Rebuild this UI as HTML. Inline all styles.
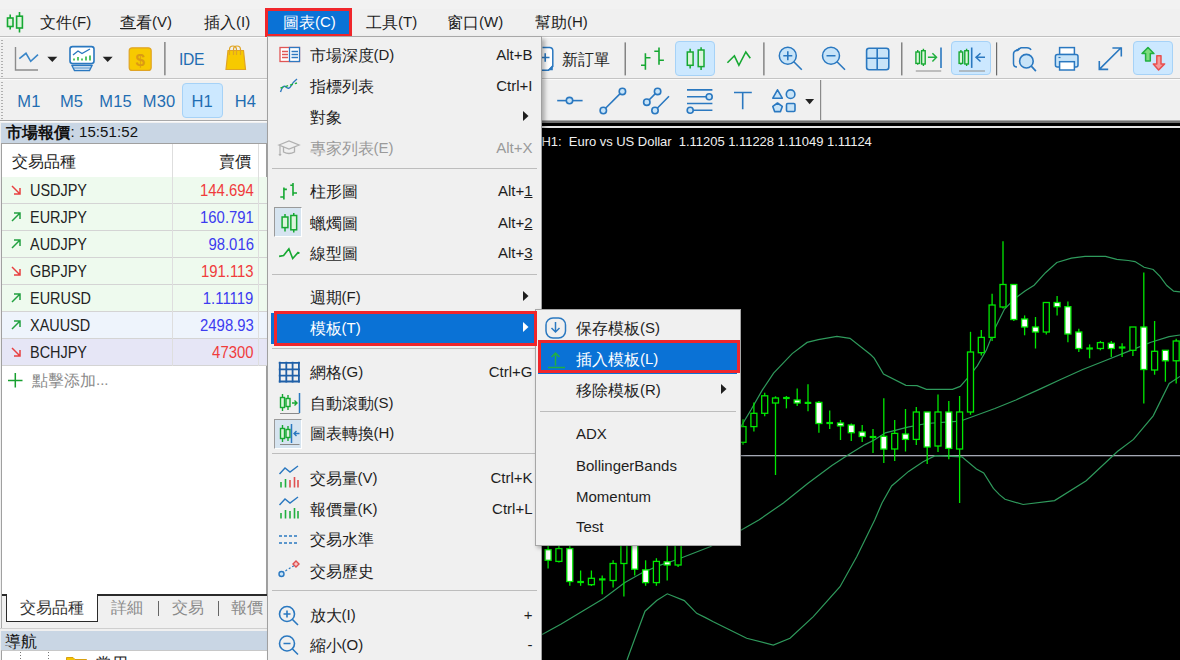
<!DOCTYPE html><html><head><meta charset="utf-8"><style>
*{box-sizing:border-box;margin:0;padding:0}
html,body{width:1180px;height:660px;overflow:hidden}
body{position:relative;background:#f0f0f0;font-family:"Liberation Sans",sans-serif;font-size:14px;color:#1e1e1e}
.a{position:absolute}
.t{position:absolute;white-space:nowrap;line-height:1}
svg{position:absolute;overflow:visible}
.cj{font-size:16px;vertical-align:-0.5px}
</style></head><body><div class="a" style="left:0px;top:0px;width:1180px;height:9px;background:#f2f2f2"></div><div class="a" style="left:0px;top:36px;width:1180px;height:1px;background:#c0c0c0"></div><div class="a" style="left:0px;top:37px;width:1180px;height:1px;background:#fbfbfb"></div><svg style="left:0px;top:0px" width="40" height="36" viewBox="0 0 40 36"><g stroke="#16a832" stroke-width="1.6" fill="#dcf5dc"><line x1="10.2" y1="14.5" x2="10.2" y2="29.5"/><rect x="7.5" y="18" width="5.5" height="8.5"/><line x1="19.5" y1="12" x2="19.5" y2="32.5"/><rect x="16.6" y="16.2" width="5.8" height="11.8"/></g></svg><div class="t" style="left:40px;top:14px;font-size:15px;color:#1e1e1e;"><span class="cj">文件</span>(F)</div><div class="t" style="left:120px;top:14px;font-size:15px;color:#1e1e1e;"><u><span class="cj">查</span></u><span class="cj">看</span>(V)</div><div class="t" style="left:204px;top:14px;font-size:15px;color:#1e1e1e;"><span class="cj">插入</span>(I)</div><div class="t" style="left:366px;top:14px;font-size:15px;color:#1e1e1e;"><span class="cj">工具</span>(T)</div><div class="t" style="left:447px;top:14px;font-size:15px;color:#1e1e1e;"><span class="cj">窗口</span>(W)</div><div class="t" style="left:535px;top:14px;font-size:15px;color:#1e1e1e;"><span class="cj">幫助</span>(H)</div><div class="a" style="left:264.8px;top:8.2px;width:87px;height:29px;background:#0a72d6;border:3.7px solid #f0262b"></div><div class="t" style="left:283px;top:14px;font-size:15px;color:#ffffff;"><span class="cj">圖表</span>(C)</div><div class="a" style="left:0px;top:78px;width:1180px;height:1px;background:#c4c4c4"></div><div class="a" style="left:0px;top:79px;width:1180px;height:1px;background:#fbfbfb"></div><div class="a" style="left:0px;top:120px;width:1180px;height:1px;background:#a9a9a9"></div><div class="a" style="left:0px;top:121px;width:1180px;height:1px;background:#fbfbfb"></div><div class="a" style="left:0.5px;top:40px;width:2px;height:1px;background:#b0b0b0"></div><div class="a" style="left:0.5px;top:43px;width:2px;height:1px;background:#b0b0b0"></div><div class="a" style="left:0.5px;top:46px;width:2px;height:1px;background:#b0b0b0"></div><div class="a" style="left:0.5px;top:49px;width:2px;height:1px;background:#b0b0b0"></div><div class="a" style="left:0.5px;top:52px;width:2px;height:1px;background:#b0b0b0"></div><div class="a" style="left:0.5px;top:55px;width:2px;height:1px;background:#b0b0b0"></div><div class="a" style="left:0.5px;top:58px;width:2px;height:1px;background:#b0b0b0"></div><div class="a" style="left:0.5px;top:61px;width:2px;height:1px;background:#b0b0b0"></div><div class="a" style="left:0.5px;top:64px;width:2px;height:1px;background:#b0b0b0"></div><div class="a" style="left:0.5px;top:67px;width:2px;height:1px;background:#b0b0b0"></div><div class="a" style="left:0.5px;top:70px;width:2px;height:1px;background:#b0b0b0"></div><div class="a" style="left:0.5px;top:73px;width:2px;height:1px;background:#b0b0b0"></div><div class="a" style="left:0.5px;top:76px;width:2px;height:1px;background:#b0b0b0"></div><div class="a" style="left:0.5px;top:82px;width:2px;height:1px;background:#b0b0b0"></div><div class="a" style="left:0.5px;top:85px;width:2px;height:1px;background:#b0b0b0"></div><div class="a" style="left:0.5px;top:88px;width:2px;height:1px;background:#b0b0b0"></div><div class="a" style="left:0.5px;top:91px;width:2px;height:1px;background:#b0b0b0"></div><div class="a" style="left:0.5px;top:94px;width:2px;height:1px;background:#b0b0b0"></div><div class="a" style="left:0.5px;top:97px;width:2px;height:1px;background:#b0b0b0"></div><div class="a" style="left:0.5px;top:100px;width:2px;height:1px;background:#b0b0b0"></div><div class="a" style="left:0.5px;top:103px;width:2px;height:1px;background:#b0b0b0"></div><div class="a" style="left:0.5px;top:106px;width:2px;height:1px;background:#b0b0b0"></div><div class="a" style="left:0.5px;top:109px;width:2px;height:1px;background:#b0b0b0"></div><div class="a" style="left:0.5px;top:112px;width:2px;height:1px;background:#b0b0b0"></div><div class="a" style="left:0.5px;top:115px;width:2px;height:1px;background:#b0b0b0"></div><div class="a" style="left:0.5px;top:118px;width:2px;height:1px;background:#b0b0b0"></div><svg style="left:0px;top:38px" width="270" height="40" viewBox="0 0 270 40">
<g fill="none" stroke-width="1.4">
<path d="M15.5 9 V32 H38" stroke="#8c8c8c"/>
<path d="M19.3 20.7 L26 15.3 L30.7 23.3 L38 16.7" stroke="#3a86c8" stroke-width="1.6"/>
</g>
<path d="M47.3 18.7 H57.3 L52.3 24 Z" fill="#222"/>
<rect x="70" y="8.6" width="24" height="17" rx="2.5" fill="#fff" stroke="#2a78c0" stroke-width="1.6"/>
<path d="M73 17 L78 13 L82 15.5 L90 11" fill="none" stroke="#2a78c0" stroke-width="1.4"/>
<g stroke="#2ab540" stroke-width="1.6"><line x1="74" y1="22.5" x2="74" y2="20.5"/><line x1="78" y1="22.5" x2="78" y2="19"/><line x1="82" y1="22.5" x2="82" y2="20.5"/><line x1="86" y1="22.5" x2="86" y2="18.5"/><line x1="90" y1="22.5" x2="90" y2="17.5"/></g>
<path d="M72 27.5 H92 L89.5 32.5 H74.5 Z" fill="#fff" stroke="#2a78c0" stroke-width="1.4"/>
<line x1="74" y1="30" x2="90" y2="30" stroke="#2a78c0" stroke-width="1"/>
<path d="M102.7 18.7 H112.7 L107.7 24 Z" fill="#222"/>
<rect x="129.2" y="9.8" width="22" height="22.6" rx="3" fill="#f7c900" stroke="#e0a424" stroke-width="1.2"/>
<text x="140.2" y="27.5" font-size="17" font-family="Liberation Sans" font-weight="bold" fill="#dc9a14" text-anchor="middle">$</text>
<rect x="164.3" y="4" width="1.2" height="33.3" fill="#6a6a6a"/>
<path d="M226 31.5 L228 12.5 H243.5 L245.5 31.5 Z" fill="#f7c900" stroke="#e0a424" stroke-width="1.2"/>
<path d="M229.5 17 V11.5 A3.5 3.5 0 0 1 236.5 11.5 V17 M233.5 17 V11.5 A3.5 3.5 0 0 1 240.5 11.5 V17" fill="none" stroke="#e0a424" stroke-width="1.2"/>
</svg><div class="t" style="left:178.5px;top:50.5px;font-size:16.5px;color:#1f6db2;letter-spacing:-0.3px;transform:scaleX(0.95);transform-origin:left">IDE</div><div class="a" style="left:181.6px;top:82.7px;width:41px;height:35px;background:#cce8ff;border:1px solid #a6d2f7;border-radius:4px"></div><div class="t" style="left:17.3px;top:92.5px;font-size:16.5px;color:#1f6db2;letter-spacing:0.1px">M1</div><div class="t" style="left:60px;top:92.5px;font-size:16.5px;color:#1f6db2;letter-spacing:0.1px">M5</div><div class="t" style="left:99.3px;top:92.5px;font-size:16.5px;color:#1f6db2;letter-spacing:0.1px">M15</div><div class="t" style="left:142.8px;top:92.5px;font-size:16.5px;color:#1f6db2;letter-spacing:0.1px">M30</div><div class="t" style="left:191.6px;top:92.5px;font-size:16.5px;color:#1f6db2;letter-spacing:0.1px">H1</div><div class="t" style="left:234.7px;top:92.5px;font-size:16.5px;color:#1f6db2;letter-spacing:0.1px">H4</div><div class="a" style="left:541px;top:121px;width:639px;height:539px;background:#000"></div><div class="a" style="left:541px;top:121px;width:639px;height:1.5px;background:#707070"></div><div class="a" style="left:541px;top:126px;width:639px;height:1.5px;background:#e4e4e4"></div><svg style="left:0;top:0" width="1180" height="660" viewBox="0 0 1180 660"><defs><clipPath id="cc"><rect x="541" y="128" width="639" height="532"/></clipPath></defs><g clip-path="url(#cc)"><rect x="541" y="455" width="639" height="1.3" fill="#a4a8b4"/><polyline points="740.0,428.1 751.2,409.5 762.4,389.9 773.6,373.1 792.2,353.6 807.1,342.4 818.3,339.6 836.9,336.4 850.0,338.3 870.5,354.5 874.2,358.2 883.5,374.1 905.9,385.3 917.1,385.6 926.4,389.4 952.5,389.4 960.2,386.4 968.2,377.3 977.3,365.9 986.4,350.0 995.5,327.3 1004.5,309.1 1015.9,297.7 1025.0,290.9 1034.1,285.2 1045.5,272.7 1056.8,262.5 1071.4,258.2 1085.0,256.4 1105.5,256.4 1116.8,259.3 1128.2,260.5 1135.0,261.6 1144.1,267.3 1153.2,269.5 1160.0,276.4 1166.8,285.5 1173.6,291.1 1180.0,291.8" fill="none" stroke="#2f9a5c" stroke-width="1.2"/><polyline points="542.1,634.6 561.2,624.0 582.4,611.2 603.6,598.5 624.9,582.6 641.8,573.0 658.8,565.6 677.9,559.2 710.0,546.7 740.0,530.7 759.2,519.8 783.4,502.9 807.7,483.5 831.9,465.4 848.8,454.5 865.0,444.6 874.2,440.0 885.4,432.8 907.8,427.2 926.4,423.5 960.0,421.2 994.9,408.5 1015.9,400.0 1040.9,388.6 1060.0,379.8 1082.7,369.5 1105.5,360.5 1128.2,351.4 1150.9,342.3 1169.1,336.6 1180.0,335.0" fill="none" stroke="#2f9a5c" stroke-width="1.2"/><polyline points="627.0,660.0 635.5,636.7 645.0,611.2 656.7,600.6 667.3,593.8 684.3,600.6 696.7,613.3 705.5,617.6 713.3,621.7 730.0,630.0 746.7,638.3 773.3,645.0 790.0,638.3 813.3,616.7 840.0,586.7 856.7,556.7 874.7,520.0 882.0,502.9 891.6,486.0 908.6,471.4 923.1,461.7 935.2,455.7 961.9,456.9 976.4,469.0 983.7,473.0 993.4,488.4 999.4,494.6 1005.0,499.3 1023.1,504.5 1054.6,500.6 1086.2,480.8 1117.7,451.3 1133.5,439.4 1153.2,415.8 1169.2,383.4 1180.0,376.4" fill="none" stroke="#2f9a5c" stroke-width="1.2"/><line x1="548.1" y1="530" x2="548.1" y2="568.4" stroke="#00e800" stroke-width="1.3"/><rect x="545.1" y="549.7" width="6" height="10.6" fill="#fff" stroke="#00e800" stroke-width="1.3"/><line x1="558.9" y1="540" x2="558.9" y2="562.4" stroke="#00e800" stroke-width="1.3"/><rect x="555.9" y="548.6" width="6" height="12.8" fill="#000" stroke="#00e800" stroke-width="1.3"/><line x1="569.8" y1="540" x2="569.8" y2="585.8" stroke="#00e800" stroke-width="1.3"/><rect x="566.8" y="548.6" width="6" height="32.9" fill="#fff" stroke="#00e800" stroke-width="1.3"/><line x1="580.6" y1="570.5" x2="580.6" y2="585.8" stroke="#00e800" stroke-width="1.3"/><line x1="577.3" y1="582" x2="583.9" y2="582" stroke="#00e800" stroke-width="2.2"/><line x1="591.4" y1="570.5" x2="591.4" y2="586" stroke="#00e800" stroke-width="1.3"/><rect x="588.4" y="578.3" width="6" height="6.4" fill="#000" stroke="#00e800" stroke-width="1.3"/><line x1="602.2" y1="575.6" x2="602.2" y2="594.2" stroke="#00e800" stroke-width="1.3"/><line x1="599.0" y1="579.4" x2="605.5" y2="579.4" stroke="#00e800" stroke-width="2.2"/><line x1="613.1" y1="560.3" x2="613.1" y2="587.5" stroke="#00e800" stroke-width="1.3"/><rect x="610.1" y="563.5" width="6" height="17.0" fill="#000" stroke="#00e800" stroke-width="1.3"/><line x1="623.9" y1="530" x2="623.9" y2="596.4" stroke="#00e800" stroke-width="1.3"/><rect x="620.9" y="540" width="6" height="23.5" fill="#000" stroke="#00e800" stroke-width="1.3"/><line x1="634.7" y1="530" x2="634.7" y2="575.6" stroke="#00e800" stroke-width="1.3"/><rect x="631.7" y="540" width="6" height="29.2" fill="#fff" stroke="#00e800" stroke-width="1.3"/><line x1="645.6" y1="560.3" x2="645.6" y2="585.8" stroke="#00e800" stroke-width="1.3"/><rect x="642.6" y="569.9" width="6" height="12.7" fill="#fff" stroke="#00e800" stroke-width="1.3"/><line x1="656.4" y1="558.2" x2="656.4" y2="585.8" stroke="#00e800" stroke-width="1.3"/><rect x="653.4" y="561.4" width="6" height="21.2" fill="#000" stroke="#00e800" stroke-width="1.3"/><line x1="667.2" y1="540" x2="667.2" y2="580.5" stroke="#00e800" stroke-width="1.3"/><rect x="664.2" y="561.8" width="6" height="3.2" fill="#fff" stroke="#00e800" stroke-width="1.3"/><line x1="678.1" y1="530" x2="678.1" y2="567.1" stroke="#00e800" stroke-width="1.3"/><rect x="675.1" y="540" width="6" height="25.0" fill="#000" stroke="#00e800" stroke-width="1.3"/><line x1="743.0" y1="419.3" x2="743.0" y2="444.8" stroke="#00e800" stroke-width="1.3"/><rect x="740.0" y="426.6" width="6" height="15.7" fill="#000" stroke="#00e800" stroke-width="1.3"/><line x1="753.9" y1="402.4" x2="753.9" y2="431.4" stroke="#00e800" stroke-width="1.3"/><rect x="750.9" y="413.3" width="6" height="13.3" fill="#000" stroke="#00e800" stroke-width="1.3"/><line x1="764.7" y1="392.7" x2="764.7" y2="416.2" stroke="#00e800" stroke-width="1.3"/><rect x="761.7" y="395.8" width="6" height="17.5" fill="#000" stroke="#00e800" stroke-width="1.3"/><line x1="775.5" y1="396.3" x2="775.5" y2="475" stroke="#00e800" stroke-width="1.3"/><rect x="772.5" y="398" width="6" height="5.0" fill="#000" stroke="#00e800" stroke-width="1.3"/><line x1="786.4" y1="396" x2="786.4" y2="408.4" stroke="#00e800" stroke-width="1.3"/><line x1="783.1" y1="398" x2="789.7" y2="398" stroke="#00e800" stroke-width="2.2"/><line x1="797.2" y1="388.6" x2="797.2" y2="406" stroke="#00e800" stroke-width="1.3"/><rect x="794.2" y="400" width="6" height="3.0" fill="#fff" stroke="#00e800" stroke-width="1.3"/><line x1="808.0" y1="384.2" x2="808.0" y2="411.3" stroke="#00e800" stroke-width="1.3"/><line x1="804.7" y1="402.9" x2="811.3" y2="402.9" stroke="#00e800" stroke-width="2.2"/><line x1="818.9" y1="401" x2="818.9" y2="432.7" stroke="#00e800" stroke-width="1.3"/><rect x="815.9" y="402.4" width="6" height="21.1" fill="#fff" stroke="#00e800" stroke-width="1.3"/><line x1="829.7" y1="410.4" x2="829.7" y2="429" stroke="#00e800" stroke-width="1.3"/><line x1="826.4" y1="423" x2="833.0" y2="423" stroke="#00e800" stroke-width="2.2"/><line x1="840.5" y1="420" x2="840.5" y2="440" stroke="#00e800" stroke-width="1.3"/><rect x="837.5" y="423" width="6" height="2.9" fill="#fff" stroke="#00e800" stroke-width="1.3"/><line x1="851.3" y1="423.5" x2="851.3" y2="441" stroke="#00e800" stroke-width="1.3"/><rect x="848.3" y="425" width="6" height="7.7" fill="#fff" stroke="#00e800" stroke-width="1.3"/><line x1="862.2" y1="425" x2="862.2" y2="442" stroke="#00e800" stroke-width="1.3"/><rect x="859.2" y="432" width="6" height="4.5" fill="#fff" stroke="#00e800" stroke-width="1.3"/><line x1="873.0" y1="429" x2="873.0" y2="453" stroke="#00e800" stroke-width="1.3"/><line x1="869.7" y1="437" x2="876.3" y2="437" stroke="#00e800" stroke-width="2.2"/><line x1="883.8" y1="398.3" x2="883.8" y2="463" stroke="#00e800" stroke-width="1.3"/><rect x="880.8" y="436.3" width="6" height="12.8" fill="#fff" stroke="#00e800" stroke-width="1.3"/><line x1="894.7" y1="420" x2="894.7" y2="461" stroke="#00e800" stroke-width="1.3"/><rect x="891.7" y="433.4" width="6" height="15.6" fill="#000" stroke="#00e800" stroke-width="1.3"/><line x1="905.5" y1="409" x2="905.5" y2="451.5" stroke="#00e800" stroke-width="1.3"/><rect x="902.5" y="434" width="6" height="5.4" fill="#fff" stroke="#00e800" stroke-width="1.3"/><line x1="916.3" y1="407" x2="916.3" y2="445" stroke="#00e800" stroke-width="1.3"/><rect x="913.3" y="412" width="6" height="27.4" fill="#000" stroke="#00e800" stroke-width="1.3"/><line x1="927.2" y1="412" x2="927.2" y2="464" stroke="#00e800" stroke-width="1.3"/><rect x="924.2" y="412" width="6" height="35.0" fill="#fff" stroke="#00e800" stroke-width="1.3"/><line x1="938.0" y1="394.4" x2="938.0" y2="452" stroke="#00e800" stroke-width="1.3"/><rect x="935.0" y="412" width="6" height="34.0" fill="#000" stroke="#00e800" stroke-width="1.3"/><line x1="948.8" y1="401" x2="948.8" y2="459.3" stroke="#00e800" stroke-width="1.3"/><rect x="945.8" y="412" width="6" height="36.4" fill="#fff" stroke="#00e800" stroke-width="1.3"/><line x1="959.6" y1="396" x2="959.6" y2="503" stroke="#00e800" stroke-width="1.3"/><rect x="956.6" y="412" width="6" height="37.0" fill="#000" stroke="#00e800" stroke-width="1.3"/><line x1="970.5" y1="331.8" x2="970.5" y2="414.8" stroke="#00e800" stroke-width="1.3"/><rect x="967.5" y="352" width="6" height="60.0" fill="#000" stroke="#00e800" stroke-width="1.3"/><line x1="981.3" y1="330" x2="981.3" y2="355.5" stroke="#00e800" stroke-width="1.3"/><rect x="978.3" y="337.4" width="6" height="15.3" fill="#000" stroke="#00e800" stroke-width="1.3"/><line x1="992.1" y1="293.8" x2="992.1" y2="341" stroke="#00e800" stroke-width="1.3"/><rect x="989.1" y="305" width="6" height="32.4" fill="#000" stroke="#00e800" stroke-width="1.3"/><line x1="1003.0" y1="241.3" x2="1003.0" y2="308.5" stroke="#00e800" stroke-width="1.3"/><rect x="1000.0" y="284.5" width="6" height="22.5" fill="#000" stroke="#00e800" stroke-width="1.3"/><line x1="1013.8" y1="284.5" x2="1013.8" y2="321" stroke="#00e800" stroke-width="1.3"/><rect x="1010.8" y="284.5" width="6" height="35.0" fill="#fff" stroke="#00e800" stroke-width="1.3"/><line x1="1024.6" y1="315.4" x2="1024.6" y2="335.3" stroke="#00e800" stroke-width="1.3"/><rect x="1021.6" y="319" width="6" height="8.0" fill="#fff" stroke="#00e800" stroke-width="1.3"/><line x1="1035.5" y1="317" x2="1035.5" y2="348.5" stroke="#00e800" stroke-width="1.3"/><rect x="1032.5" y="327" width="6" height="5.0" fill="#fff" stroke="#00e800" stroke-width="1.3"/><line x1="1046.3" y1="302.5" x2="1046.3" y2="334.6" stroke="#00e800" stroke-width="1.3"/><rect x="1043.3" y="302.5" width="6" height="29.5" fill="#000" stroke="#00e800" stroke-width="1.3"/><line x1="1057.1" y1="296" x2="1057.1" y2="315.4" stroke="#00e800" stroke-width="1.3"/><rect x="1054.1" y="302.5" width="6" height="4.2" fill="#fff" stroke="#00e800" stroke-width="1.3"/><line x1="1067.9" y1="301.5" x2="1067.9" y2="342.3" stroke="#00e800" stroke-width="1.3"/><rect x="1064.9" y="306.7" width="6" height="27.3" fill="#fff" stroke="#00e800" stroke-width="1.3"/><line x1="1078.8" y1="328.7" x2="1078.8" y2="352" stroke="#00e800" stroke-width="1.3"/><rect x="1075.8" y="332" width="6" height="16.5" fill="#fff" stroke="#00e800" stroke-width="1.3"/><line x1="1089.6" y1="344.4" x2="1089.6" y2="358.3" stroke="#00e800" stroke-width="1.3"/><line x1="1086.3" y1="348.5" x2="1092.9" y2="348.5" stroke="#00e800" stroke-width="2.2"/><line x1="1100.4" y1="340.9" x2="1100.4" y2="350.3" stroke="#00e800" stroke-width="1.3"/><rect x="1097.4" y="342.6" width="6" height="5.9" fill="#000" stroke="#00e800" stroke-width="1.3"/><line x1="1111.3" y1="341" x2="1111.3" y2="357" stroke="#00e800" stroke-width="1.3"/><rect x="1108.3" y="343.3" width="6" height="5.2" fill="#fff" stroke="#00e800" stroke-width="1.3"/><line x1="1122.1" y1="343.3" x2="1122.1" y2="357" stroke="#00e800" stroke-width="1.3"/><line x1="1118.8" y1="347.5" x2="1125.4" y2="347.5" stroke="#00e800" stroke-width="2.2"/><line x1="1132.9" y1="327" x2="1132.9" y2="356" stroke="#00e800" stroke-width="1.3"/><rect x="1129.9" y="327" width="6" height="23.3" fill="#000" stroke="#00e800" stroke-width="1.3"/><line x1="1143.8" y1="272.5" x2="1143.8" y2="403.6" stroke="#00e800" stroke-width="1.3"/><rect x="1140.8" y="327" width="6" height="42.5" fill="#fff" stroke="#00e800" stroke-width="1.3"/><line x1="1154.6" y1="321" x2="1154.6" y2="374.7" stroke="#00e800" stroke-width="1.3"/><rect x="1151.6" y="351.3" width="6" height="18.7" fill="#000" stroke="#00e800" stroke-width="1.3"/><line x1="1165.4" y1="350.3" x2="1165.4" y2="381.7" stroke="#00e800" stroke-width="1.3"/><rect x="1162.4" y="350.3" width="6" height="10.5" fill="#fff" stroke="#00e800" stroke-width="1.3"/><line x1="1176.2" y1="338.8" x2="1176.2" y2="383.4" stroke="#00e800" stroke-width="1.3"/><rect x="1173.2" y="341" width="6" height="19.8" fill="#000" stroke="#00e800" stroke-width="1.3"/></g></svg><div class="t" style="left:541.5px;top:134.5px;font-size:13px;color:#f0f0f0;letter-spacing:-0.03px">H1:&nbsp; Euro vs US Dollar&nbsp; 1.11205 1.11228 1.11049 1.11124</div><div class="a" style="left:0px;top:122px;width:268px;height:538px;background:#f0f0f0"></div><div class="a" style="left:1px;top:123px;width:266px;height:20px;background:#c9d6e4"></div><div class="t" style="left:6px;top:124px;font-size:15px;color:#111;letter-spacing:0.1px"><b><span class="cj">市場報價</span></b>: 15:51:52</div><div class="a" style="left:1px;top:143px;width:266px;height:452px;background:#fff;border:1px solid #a0a0a0"></div><div class="a" style="left:674.7px;top:40.5px;width:40.3px;height:35.4px;background:#cce8ff;border:1px solid #a6d2f7;border-radius:4px"></div><div class="a" style="left:951.4px;top:40.8px;width:40px;height:34.7px;background:#cce8ff;border:1px solid #a6d2f7;border-radius:4px"></div><div class="a" style="left:1133.1px;top:41px;width:39.5px;height:34.4px;background:#cce8ff;border:1px solid #a6d2f7;border-radius:4px"></div><svg style="left:535px;top:38px" width="645" height="40" viewBox="0 0 645 40">
<path d="M7.5 9.4 H14.5 Q17.8 9.4 17.8 12.7 V28.5 L13.5 32.2 H7" fill="#fff" stroke="#2a78c0" stroke-width="1.5"/>
<path d="M5.5 19.5 H14.5 M10.2 15.2 V23.8" stroke="#2a78c0" stroke-width="1.6"/>
<path d="M12.5 32.2 L17.8 26.8 V32.2 Z" fill="#2a78c0"/>
<rect x="89.6" y="4.4" width="1.2" height="33" fill="#6a6a6a"/>
<g stroke="#16a832" stroke-width="1.6" fill="none">
<path d="M110.4 15.3 V31.8 M106 27.3 H110.4 M110.4 19.7 H115.5"/>
<path d="M124 9.5 V26.7 M119.3 13.3 H124 M124 22.2 H128.9"/>
</g>
<g stroke="#16a832" stroke-width="1.5" fill="#dcf5dc">
<path d="M155.15 10.8 V30.5 M166.1 9.2 V32"/>
<rect x="152.3" y="14" width="5.8" height="13.3"/>
<rect x="163.2" y="12" width="5.8" height="16.6"/>
</g>
<path d="M192.4 24.8 L199.4 17.8 L203.9 27.3 L210.8 14 L215.3 20.3" fill="none" stroke="#16a832" stroke-width="1.6"/>
<rect x="228.3" y="4.4" width="1.2" height="33" fill="#6a6a6a"/>
<g stroke="#2a78c0" stroke-width="1.5" fill="#c8e4f8">
<circle cx="252.8" cy="17.8" r="8.5"/><circle cx="296" cy="17.8" r="8.5"/>
</g>
<g stroke="#2a78c0" stroke-width="1.6" fill="none">
<path d="M248.3 17.8 H257.3 M252.8 13.3 V22.3 M258.8 23.8 L266.8 31.8"/>
<path d="M291.5 17.8 H300.5 M302 23.8 L310 31.8"/>
</g>
<rect x="331.6" y="10.2" width="22.2" height="21.6" rx="2.5" fill="#c8e4f8" stroke="#2a78c0" stroke-width="1.6"/>
<path d="M342.2 10.2 V31.8 M331.6 20.3 H353.8" stroke="#2a78c0" stroke-width="1.6"/>
<rect x="366.2" y="4.4" width="1.2" height="33" fill="#6a6a6a"/>
<g stroke="#16a832" stroke-width="1.4" fill="#dcf5dc">
<path d="M382.7 12 V26.7 M388.4 10.8 V28"/>
<rect x="380.9" y="14" width="3.6" height="11.4"/><rect x="386.6" y="12.7" width="3.6" height="13.3"/>
</g>
<path d="M392.9 19.3 H401.5 M397.4 15.2 L401.5 19.3 L397.4 23.5" fill="none" stroke="#22b040" stroke-width="1.5"/>
<path d="M406 9.5 V29.9" stroke="#2a78c0" stroke-width="1.6"/>
<path d="M380.8 33 H406.2" stroke="#9a9a9a" stroke-width="1.2"/>
<g stroke="#16a832" stroke-width="1.4" fill="#dcf5dc">
<path d="M425.9 12 V26.7 M431.6 10.8 V28"/>
<rect x="424.1" y="14" width="3.6" height="11.4"/><rect x="429.8" y="12.7" width="3.6" height="13.3"/>
</g>
<path d="M436.7 9.5 V29.9" stroke="#2a78c0" stroke-width="1.6"/>
<path d="M450 19.3 H441 M445.5 15.2 L441 19.3 L445.5 23.5" fill="none" stroke="#2a78c0" stroke-width="1.5"/>
<path d="M424 33 H450" stroke="#9a9a9a" stroke-width="1.2"/>
<rect x="461" y="4.4" width="1.2" height="33" fill="#6a6a6a"/>
<g fill="none" stroke="#2a78c0" stroke-width="1.5">
<path d="M482 29 Q478.5 29 478.5 25.5 V16 Q478.5 13.5 481 12.5 L486 9.8 H492 Q495 9.8 496 12"/>
<path d="M481 12.5 Q484 12.5 484.5 10"/>
</g>
<circle cx="491.4" cy="23.2" r="6.8" fill="#c8e4f8" stroke="#2a78c0" stroke-width="1.6"/>
<path d="M496.3 28.2 L500.9 33.2" stroke="#2a78c0" stroke-width="1.7"/>
<g stroke="#2a78c0" stroke-width="1.5">
<rect x="524.6" y="9.6" width="14.8" height="7" fill="#fff"/>
<rect x="520.4" y="16.6" width="22.6" height="12.4" rx="2" fill="#c8e4f8"/>
<rect x="524.6" y="23.7" width="14.8" height="8.3" fill="#fff"/>
</g>
<path d="M523.5 19.5 H525.5" stroke="#2a78c0" stroke-width="1.2"/>
<g fill="none" stroke="#2a78c0" stroke-width="1.6">
<path d="M564.3 31.4 L586.3 9.5 M564.3 23.1 V31.4 H573.2 M577.4 10 H586.3 V18.4"/>
</g>
</svg><svg style="left:1132px;top:38px" width="48" height="40" viewBox="0 0 48 40">
<path d="M16 9.5 L21.9 15.6 H18.3 V23.1 H13.6 V15.6 H10 Z" fill="#7ddc7d" stroke="#22b040" stroke-width="1.5" stroke-linejoin="round"/>
<path d="M26.6 32 L32.6 25.9 H29 V17.8 H24.8 V25.9 H21.3 Z" fill="#f59a9a" stroke="#e85050" stroke-width="1.5" stroke-linejoin="round"/>
</svg><div class="t" style="left:561.7px;top:51px;font-size:15px;color:#1e1e1e;"><span class="cj">新訂單</span></div><svg style="left:535px;top:80px" width="300" height="42" viewBox="0 0 300 42">
<g fill="none" stroke="#2a78c0" stroke-width="1.6">
<path d="M22.2 20.6 H47.6"/>
<path d="M68.3 30.5 L87.4 11.4"/>
<path d="M111.8 22.2 L122.6 11.4 M120 30.5 L134 16.3"/>
<path d="M152 9.9 H177.4 M152 16.8 H174.2 M152 23.5 H177.4 M155.2 30.3 H177.4"/>
<path d="M199 12.5 H216.8 M207.7 12.5 V29.2"/>
</g>
<g fill="#c8e4f8" stroke="#2a78c0" stroke-width="1.6">
<circle cx="34.5" cy="20.6" r="3.2"/>
<circle cx="68.3" cy="30.5" r="3.2"/><circle cx="87.4" cy="11.4" r="3.2"/>
<circle cx="111.8" cy="22.2" r="3.2"/><circle cx="122.6" cy="11.4" r="3.2"/><circle cx="120" cy="30.5" r="3.2"/>
<circle cx="174.2" cy="16.8" r="3"/><circle cx="155.2" cy="30.3" r="3"/>
<path d="M242.5 9.8 L247.3 18.2 H237.8 Z" stroke-linejoin="round"/>
<circle cx="255.6" cy="14.2" r="4.3"/>
<path d="M242.5 23 L247.3 26.4 L245.5 31.6 H239.6 L237.8 26.4 Z" stroke-linejoin="round"/>
<rect x="251.5" y="23.5" width="8.5" height="8" rx="1.2"/>
</g>
<path d="M270.2 19 H279.1 L274.65 24.2 Z" fill="#222"/>
<rect x="285" y="0" width="1.2" height="40" fill="#8a8a8a"/>
</svg><div class="a" style="left:2px;top:177px;width:265px;height:27px;background:#eefaee"></div><div class="a" style="left:2px;top:203px;width:265px;height:1px;background:#d4d4d4"></div><div class="t" style="left:30px;top:182.2px;font-size:16.5px;color:#222;transform:scaleX(0.875);transform-origin:left">USDJPY</div><div class="t" style="right:926.4px;top:182.6px;font-size:16px;color:#f03c3c;transform:scaleX(0.93);transform-origin:right">144.694</div><svg style="left:10px;top:184px" width="12" height="12" viewBox="0 0 12 12"><path d="M2 2 L10 10 M10 4 V10 H4" fill="none" stroke="#e84040" stroke-width="1.5"/></svg><div class="a" style="left:2px;top:204px;width:265px;height:27px;background:#eefaee"></div><div class="a" style="left:2px;top:230px;width:265px;height:1px;background:#d4d4d4"></div><div class="t" style="left:30px;top:209.2px;font-size:16.5px;color:#222;transform:scaleX(0.875);transform-origin:left">EURJPY</div><div class="t" style="right:926.4px;top:209.6px;font-size:16px;color:#3c3cf0;transform:scaleX(0.93);transform-origin:right">160.791</div><svg style="left:10px;top:211px" width="12" height="12" viewBox="0 0 12 12"><path d="M2 10 L10 2 M4 2 H10 V8" fill="none" stroke="#22a040" stroke-width="1.5"/></svg><div class="a" style="left:2px;top:231px;width:265px;height:27px;background:#eefaee"></div><div class="a" style="left:2px;top:257px;width:265px;height:1px;background:#d4d4d4"></div><div class="t" style="left:30px;top:236.2px;font-size:16.5px;color:#222;transform:scaleX(0.875);transform-origin:left">AUDJPY</div><div class="t" style="right:926.4px;top:236.6px;font-size:16px;color:#3c3cf0;transform:scaleX(0.93);transform-origin:right">98.016</div><svg style="left:10px;top:238px" width="12" height="12" viewBox="0 0 12 12"><path d="M2 10 L10 2 M4 2 H10 V8" fill="none" stroke="#22a040" stroke-width="1.5"/></svg><div class="a" style="left:2px;top:258px;width:265px;height:27px;background:#eefaee"></div><div class="a" style="left:2px;top:284px;width:265px;height:1px;background:#d4d4d4"></div><div class="t" style="left:30px;top:263.2px;font-size:16.5px;color:#222;transform:scaleX(0.875);transform-origin:left">GBPJPY</div><div class="t" style="right:926.4px;top:263.6px;font-size:16px;color:#f03c3c;transform:scaleX(0.93);transform-origin:right">191.113</div><svg style="left:10px;top:265px" width="12" height="12" viewBox="0 0 12 12"><path d="M2 2 L10 10 M10 4 V10 H4" fill="none" stroke="#e84040" stroke-width="1.5"/></svg><div class="a" style="left:2px;top:285px;width:265px;height:27px;background:#eefaee"></div><div class="a" style="left:2px;top:311px;width:265px;height:1px;background:#d4d4d4"></div><div class="t" style="left:30px;top:290.2px;font-size:16.5px;color:#222;transform:scaleX(0.875);transform-origin:left">EURUSD</div><div class="t" style="right:926.4px;top:290.6px;font-size:16px;color:#3c3cf0;transform:scaleX(0.93);transform-origin:right">1.11119</div><svg style="left:10px;top:292px" width="12" height="12" viewBox="0 0 12 12"><path d="M2 10 L10 2 M4 2 H10 V8" fill="none" stroke="#22a040" stroke-width="1.5"/></svg><div class="a" style="left:2px;top:312px;width:265px;height:27px;background:#eef4fc"></div><div class="a" style="left:2px;top:338px;width:265px;height:1px;background:#d4d4d4"></div><div class="t" style="left:30px;top:317.2px;font-size:16.5px;color:#222;transform:scaleX(0.875);transform-origin:left">XAUUSD</div><div class="t" style="right:926.4px;top:317.6px;font-size:16px;color:#3c3cf0;transform:scaleX(0.93);transform-origin:right">2498.93</div><svg style="left:10px;top:319px" width="12" height="12" viewBox="0 0 12 12"><path d="M2 10 L10 2 M4 2 H10 V8" fill="none" stroke="#22a040" stroke-width="1.5"/></svg><div class="a" style="left:2px;top:339px;width:265px;height:27px;background:#e6e6f6"></div><div class="a" style="left:2px;top:365px;width:265px;height:1px;background:#d4d4d4"></div><div class="t" style="left:30px;top:344.2px;font-size:16.5px;color:#222;transform:scaleX(0.875);transform-origin:left">BCHJPY</div><div class="t" style="right:926.4px;top:344.6px;font-size:16px;color:#f03c3c;transform:scaleX(0.93);transform-origin:right">47300</div><svg style="left:10px;top:346px" width="12" height="12" viewBox="0 0 12 12"><path d="M2 2 L10 10 M10 4 V10 H4" fill="none" stroke="#e84040" stroke-width="1.5"/></svg><div class="a" style="left:172px;top:144px;width:1px;height:222px;background:#dedede"></div><div class="a" style="left:257.5px;top:144px;width:1px;height:222px;background:#dedede"></div><div class="t" style="left:11.6px;top:153px;font-size:15px;color:#222;"><span class="cj">交易品種</span></div><div class="t" style="left:219px;top:153px;font-size:15px;color:#222;"><span class="cj">賣價</span></div><svg style="left:8px;top:372.5px" width="15" height="15" viewBox="0 0 15 15"><path d="M0 7.5 H14.5 M7.3 0 V14.5" stroke="#18a030" stroke-width="1.5"/></svg><div class="t" style="left:32px;top:372px;font-size:15px;color:#8a8a8a;"><span class="cj">點擊添加</span>...</div><div class="a" style="left:1px;top:594px;width:266px;height:34px;background:#f0f0f0"></div><div class="a" style="left:1px;top:580px;width:1px;height:48px;background:#a8a8a8"></div><div class="a" style="left:2px;top:594.3px;width:265px;height:1.4px;background:#2a2a2a"></div><div class="a" style="left:5.5px;top:594.3px;width:92.3px;height:27.8px;background:#fff;border:1.6px solid #2a2a2a;border-top:none"></div><div class="a" style="left:7px;top:594.3px;width:89.4px;height:1.4px;background:#fff"></div><div class="t" style="left:19.6px;top:599px;font-size:15px;color:#333;"><span class="cj">交易品種</span></div><div class="t" style="left:111px;top:599px;font-size:15px;color:#8a8a8a;"><span class="cj">詳細</span></div><div class="a" style="left:157.5px;top:601px;width:1.3px;height:15px;background:#666"></div><div class="t" style="left:172px;top:599px;font-size:15px;color:#8a8a8a;"><span class="cj">交易</span></div><div class="a" style="left:217.5px;top:601px;width:1.3px;height:15px;background:#666"></div><div class="t" style="left:231px;top:599px;font-size:15px;color:#8a8a8a;"><span class="cj">報價</span></div><div class="a" style="left:0px;top:627.8px;width:267px;height:1.2px;background:#cfcfcf"></div><div class="a" style="left:1px;top:631.4px;width:266px;height:18.5px;background:#c9d6e4"></div><div class="t" style="left:5.3px;top:632.5px;font-size:15px;color:#111;"><span class="cj">導航</span></div><div class="a" style="left:1px;top:650px;width:266px;height:10px;background:#fff;border-left:1px solid #a0a0a0;border-top:1px solid #c8c8c8"></div><div class="a" style="left:19.6px;top:652px;width:1px;height:1.2px;background:#777"></div><div class="a" style="left:19.6px;top:655px;width:1px;height:1.2px;background:#777"></div><div class="a" style="left:19.6px;top:658px;width:1px;height:1.2px;background:#777"></div><div class="a" style="left:48px;top:652px;width:1px;height:1.2px;background:#777"></div><div class="a" style="left:48px;top:655px;width:1px;height:1.2px;background:#777"></div><div class="a" style="left:48px;top:658px;width:1px;height:1.2px;background:#777"></div><svg style="left:66px;top:656px" width="22" height="10" viewBox="0 0 22 10"><path d="M0.5 1.5 H7 L9 3.5 H20.5 V10 H0.5 Z" fill="#f5c400" stroke="#d8a010" stroke-width="1"/></svg><div class="t" style="left:96px;top:655px;font-size:15px;color:#222;"><span class="cj">常用</span></div><div class="a" style="left:267px;top:35.5px;width:275px;height:630px;background:#f0f0f0;border:1px solid #a0a0a0;border-top:1.5px solid #a8a8a8;box-shadow:3px 3px 4px rgba(0,0,0,.28)"></div><div class="a" style="left:272px;top:168px;width:265px;height:1px;background:#bdbdbd"></div><div class="a" style="left:272px;top:273.5px;width:265px;height:1px;background:#bdbdbd"></div><div class="a" style="left:272px;top:347.5px;width:265px;height:1px;background:#bdbdbd"></div><div class="a" style="left:272px;top:453px;width:265px;height:1px;background:#bdbdbd"></div><div class="a" style="left:272px;top:590.3px;width:265px;height:1px;background:#bdbdbd"></div><div class="a" style="left:271px;top:312.8px;width:266px;height:31px;background:#0a72d6"></div><div class="t" style="left:309.5px;top:47.4px;font-size:15px;color:#1e1e1e;"><span class="cj">市場深度</span>(D)</div><div class="t" style="right:647.5px;top:47.4px;font-size:15px;color:#1e1e1e">Alt+B</div><div class="t" style="left:309.5px;top:78.3px;font-size:15px;color:#1e1e1e;"><span class="cj">指標列表</span></div><div class="t" style="right:647.5px;top:78.3px;font-size:15px;color:#1e1e1e">Ctrl+I</div><div class="t" style="left:309.5px;top:109.2px;font-size:15px;color:#1e1e1e;"><span class="cj">對象</span></div><svg style="left:522.8px;top:111.2px" width="6" height="10" viewBox="0 0 6 10"><path d="M0 0 L5.5 5 L0 10 Z" fill="#1e1e1e"/></svg><div class="t" style="left:309.5px;top:140px;font-size:15px;color:#9a9a9a;"><span class="cj">專家列表</span>(E)</div><div class="t" style="right:647.5px;top:140px;font-size:15px;color:#9a9a9a">Alt+X</div><div class="t" style="left:309.5px;top:183.4px;font-size:15px;color:#1e1e1e;"><span class="cj">柱形圖</span></div><div class="t" style="right:647.5px;top:183.4px;font-size:15px;color:#1e1e1e">Alt+<u>1</u></div><div class="t" style="left:309.5px;top:214.6px;font-size:15px;color:#1e1e1e;"><span class="cj">蠟燭圖</span></div><div class="t" style="right:647.5px;top:214.6px;font-size:15px;color:#1e1e1e">Alt+<u>2</u></div><div class="t" style="left:309.5px;top:245.4px;font-size:15px;color:#1e1e1e;"><span class="cj">線型圖</span></div><div class="t" style="right:647.5px;top:245.4px;font-size:15px;color:#1e1e1e">Alt+<u>3</u></div><div class="t" style="left:309.5px;top:288.8px;font-size:15px;color:#1e1e1e;"><span class="cj">週期</span>(F)</div><svg style="left:522.8px;top:290.8px" width="6" height="10" viewBox="0 0 6 10"><path d="M0 0 L5.5 5 L0 10 Z" fill="#1e1e1e"/></svg><div class="t" style="left:309.5px;top:320.2px;font-size:15px;color:#ffffff;"><span class="cj">模板</span>(T)</div><svg style="left:522.8px;top:322.2px" width="6" height="10" viewBox="0 0 6 10"><path d="M0 0 L5.5 5 L0 10 Z" fill="#ffffff"/></svg><div class="t" style="left:309.5px;top:363.5px;font-size:15px;color:#1e1e1e;"><span class="cj">網格</span>(G)</div><div class="t" style="right:647.5px;top:363.5px;font-size:15px;color:#1e1e1e">Ctrl+G</div><div class="t" style="left:309.5px;top:394.6px;font-size:15px;color:#1e1e1e;"><span class="cj">自動滾動</span>(S)</div><div class="t" style="left:309.5px;top:425px;font-size:15px;color:#1e1e1e;"><span class="cj">圖表轉換</span>(H)</div><div class="t" style="left:309.5px;top:469.6px;font-size:15px;color:#1e1e1e;"><span class="cj">交易量</span>(V)</div><div class="t" style="right:647.5px;top:469.6px;font-size:15px;color:#1e1e1e">Ctrl+K</div><div class="t" style="left:309.5px;top:500.8px;font-size:15px;color:#1e1e1e;"><span class="cj">報價量</span>(K)</div><div class="t" style="right:647.5px;top:500.8px;font-size:15px;color:#1e1e1e">Ctrl+L</div><div class="t" style="left:309.5px;top:531.4px;font-size:15px;color:#1e1e1e;"><span class="cj">交易水準</span></div><div class="t" style="left:309.5px;top:563px;font-size:15px;color:#1e1e1e;"><span class="cj">交易歷史</span></div><div class="t" style="left:309.5px;top:606.5px;font-size:15px;color:#1e1e1e;"><span class="cj">放大</span>(I)</div><div class="t" style="right:647.5px;top:606.5px;font-size:15px;color:#1e1e1e">+</div><div class="t" style="left:309.5px;top:636.5px;font-size:15px;color:#1e1e1e;"><span class="cj">縮小</span>(O)</div><div class="t" style="right:647.5px;top:636.5px;font-size:15px;color:#1e1e1e">-</div><div class="a" style="left:273.8px;top:207.1px;width:28.3px;height:29.6px;background:#d6e4f0;border-top:1px solid #9a9a9a;border-left:1px solid #9a9a9a;border-right:1px solid #fff;border-bottom:1px solid #fff"></div><div class="a" style="left:274px;top:418.6px;width:28px;height:30px;background:#d6e4f0;border-top:1px solid #9a9a9a;border-left:1px solid #9a9a9a;border-right:1px solid #fff;border-bottom:1px solid #fff"></div><svg style="left:267px;top:36px" width="50" height="630" viewBox="0 0 50 630">
<g transform="translate(0,0)">
<!-- market depth -->
<rect x="13" y="11.5" width="19.5" height="14" fill="#fff" stroke="#e05555" stroke-width="1.3"/>
<rect x="22.5" y="11.5" width="10" height="14" fill="#fff" stroke="#2f78c0" stroke-width="1.3"/>
<path d="M15 15.5 H21 M15 18.5 H21 M15 21.5 H21" stroke="#e05555" stroke-width="1.3"/>
<path d="M24.5 15.5 H31 M24.5 18.5 H31 M24.5 21.5 H31" stroke="#2f78c0" stroke-width="1.3"/>
<!-- indicators -->
<path d="M13.5 56 Q16 48 19 51 T24 50 T30 43" fill="none" stroke="#2f78c0" stroke-width="1.4"/>
<path d="M13.5 52 L30 47" stroke="#22b040" stroke-width="1.4" stroke-dasharray="3 2"/>
<!-- expert cap -->
<path d="M12 109 L22 105 L32 109 L22 113 Z" fill="none" stroke="#b0b0b0" stroke-width="1.3"/>
<path d="M16.5 111 V116 Q22 119 27.5 116 V111" fill="none" stroke="#b0b0b0" stroke-width="1.3"/>
<path d="M13 109.5 V117" stroke="#b0b0b0" stroke-width="1.2"/><circle cx="13" cy="118.5" r="1.3" fill="#b0b0b0"/>
<!-- bar chart -->
<g stroke="#16a832" stroke-width="1.6" fill="none">
<path d="M16.9 151.4 V163.5 M13.3 161 H16.9 M16.9 153.4 H19.9"/>
<path d="M26 146.9 V159.8 M23.3 149.2 H26 M26 157 H30"/>
</g>
<!-- candles -->
<g stroke="#16a832" stroke-width="1.5" fill="#dcf5dc">
<path d="M18 178 V195.4 M26.75 176.9 V196.6"/>
<rect x="15.1" y="181" width="5.8" height="10.6"/>
<rect x="23.85" y="179.5" width="5.8" height="14.3"/>
</g>
<!-- line -->
<path d="M12.1 220.4 L16.6 219.6 L21.9 212.8 L25.7 222.6 L31 216.6 L32.5 217.3" fill="none" stroke="#16a832" stroke-width="1.6"/>
<!-- grid -->
<g stroke="#2060a8" stroke-width="1.8">
<path d="M11.8 326.8 H32.9 M11.8 333.3 H32.9 M11.8 339.6 H32.9 M11.8 345.5 H32.9"/>
<path d="M12.8 325.8 V346.5 M19.3 325.8 V346.5 M25.6 325.8 V346.5 M31.9 325.8 V346.5"/>
</g>
<!-- autoscroll -->
<g stroke="#16a832" stroke-width="1.4" fill="#dcf5dc">
<path d="M15.5 358 V375"/><rect x="13.5" y="361.5" width="4" height="10"/>
<path d="M21 359 V374"/><rect x="19" y="362.5" width="4" height="8"/>
</g>
<path d="M25 367 H30 M27.5 364.5 L30 367 L27.5 369.5" fill="none" stroke="#16a832" stroke-width="1.4"/>
<path d="M32.5 357 V377" stroke="#2a78c0" stroke-width="1.5"/>
<path d="M13 377.5 H32.5" stroke="#8a8a8a" stroke-width="1"/>
<!-- chart shift -->
<g stroke="#16a832" stroke-width="1.4" fill="#dcf5dc">
<path d="M15.5 389 V406"/><rect x="13.5" y="392.5" width="4" height="10"/>
<path d="M21 390 V405"/><rect x="19" y="393.5" width="4" height="8"/>
</g>
<path d="M24.5 388 V407" stroke="#2a78c0" stroke-width="1.5"/>
<path d="M32.5 397.5 H27 M29.5 395 L27 397.5 L29.5 400" fill="none" stroke="#2a78c0" stroke-width="1.4"/>
<path d="M13 408.5 H32.5" stroke="#8a8a8a" stroke-width="1"/>
<!-- volumes -->
<path d="M12.5 438 L18 432 L23 436 L31 430" fill="none" stroke="#2a78c0" stroke-width="1.4"/>
<g stroke-width="1.6"><path d="M14 451.5 V446 M18.5 451.5 V443" stroke="#22b040"/><path d="M23 451.5 V444 M27.5 451.5 V441 M31 451.5 V444" stroke="#e05050"/></g>
<path d="M12.5 469 L18 463 L23 467 L31 461" fill="none" stroke="#2a78c0" stroke-width="1.4"/>
<g stroke-width="1.6" stroke="#22b040"><path d="M14 482.5 V477 M18.5 482.5 V474 M23 482.5 V475 M27.5 482.5 V472 M31 482.5 V475"/></g>
<!-- trade levels -->
<path d="M12 500 H32 M12 507 H32" stroke="#2a78c0" stroke-width="1.3" stroke-dasharray="3 2"/>
<!-- trade history -->
<g transform="translate(0,7)"><path d="M15 530 L28 522" stroke="#2a78c0" stroke-width="1.2" stroke-dasharray="2 2"/>
<circle cx="14.5" cy="531" r="2.5" fill="#c8e4f8" stroke="#2a78c0" stroke-width="1.4"/>
<path d="M29 518 L32 521 L29 524 L26 521 Z" fill="#f8c8c8" stroke="#e05050" stroke-width="1.4"/></g>
<!-- zoom -->
<g stroke="#2a78c0" stroke-width="1.6" fill="none">
<circle cx="20" cy="578" r="7.5"/><path d="M16.5 578 H23.5 M20 574.5 V581.5 M25.5 583.5 L31 589"/>
<circle cx="20" cy="607.5" r="7.5"/><path d="M16.5 607.5 H23.5 M25.5 613 L31 618.5"/>
</g>
</g>
</svg><div class="a" style="left:534.5px;top:309px;width:206px;height:237px;background:#f0f0f0;border:1px solid #a6a6a6;box-shadow:2px 2px 4px rgba(0,0,0,.3)"></div><div class="a" style="left:538px;top:341px;width:199px;height:33px;background:#0a72d6"></div><div class="t" style="left:576px;top:319.5px;font-size:15px;color:#1e1e1e;"><span class="cj">保存模板</span>(S)</div><div class="t" style="left:576px;top:351px;font-size:15px;color:#ffffff;"><span class="cj">插入模板</span>(L)</div><div class="t" style="left:576px;top:382px;font-size:15px;color:#1e1e1e;"><span class="cj">移除模板</span>(R)</div><div class="t" style="left:576px;top:426px;font-size:15px;color:#1e1e1e;">ADX</div><div class="t" style="left:576px;top:457.5px;font-size:15px;color:#1e1e1e;">BollingerBands</div><div class="t" style="left:576px;top:489px;font-size:15px;color:#1e1e1e;">Momentum</div><div class="t" style="left:576px;top:519.3px;font-size:15px;color:#1e1e1e;">Test</div><div class="a" style="left:540px;top:410.5px;width:196px;height:1px;background:#bdbdbd"></div><svg style="left:721px;top:384px" width="6" height="10" viewBox="0 0 6 10"><path d="M0 0 L5.5 5 L0 10 Z" fill="#1e1e1e"/></svg><svg style="left:534px;top:309px" width="50" height="70" viewBox="0 0 50 70">
<rect x="12" y="9" width="19.5" height="20" rx="7" fill="none" stroke="#2a78c0" stroke-width="1.5"/>
<path d="M21.5 13 V23 M17.5 19 L21.5 23 L25.5 19" fill="none" stroke="#2a78c0" stroke-width="1.5"/>
<path d="M21.5 56.5 V44 M17.5 48 L21.5 44 L25.5 48" fill="none" stroke="#22b040" stroke-width="1.5"/>
<path d="M14 58.5 H31" stroke="#22b040" stroke-width="1.5"/>
</svg><div class="a" style="left:274.1px;top:311px;width:262.5px;height:35.2px;border:3.7px solid #f0262b"></div><div class="a" style="left:537.8px;top:340px;width:202px;height:32.7px;border:3.7px solid #f0262b"></div></body></html>
